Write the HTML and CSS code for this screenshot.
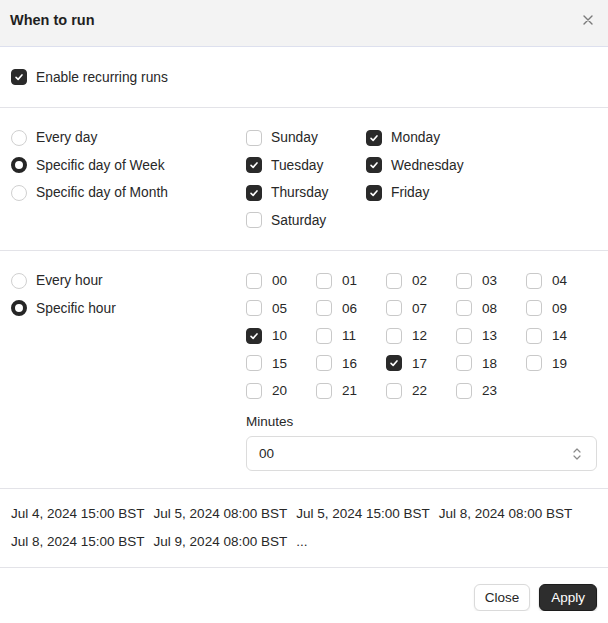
FILE: index.html
```html
<!DOCTYPE html>
<html lang="en">
<head>
<meta charset="utf-8">
<title>When to run</title>
<link rel="stylesheet" href="styles.css">
</head>
<body>
<div class="dialog">
  <header class="head">
    <h1 class="title">When to run</h1>
    <button class="x" aria-label="Close">
      <svg width="10" height="10" viewBox="0 0 10 10"><path d="M1 1L9 9M9 1L1 9" stroke="#7a7a7a" stroke-width="1.4" stroke-linecap="round"/></svg>
    </button>
  </header>

  <section class="sec sec-enable">
    <label class="opt"><span class="cb on"><svg viewBox="0 0 16 16"><path d="M4.6 8.4L7 10.7L11.4 5.6" fill="none" stroke="#fff" stroke-width="1.8" stroke-linecap="round" stroke-linejoin="round"/></svg></span>Enable recurring runs</label>
  </section>

  <section class="sec split sec-days">
    <div class="left">
      <label class="opt"><span class="rd"></span>Every day</label>
      <label class="opt"><span class="rd on"></span>Specific day of Week</label>
      <label class="opt"><span class="rd"></span>Specific day of Month</label>
    </div>
    <div class="right days">
      <label class="opt"><span class="cb"></span>Sunday</label>
      <label class="opt"><span class="cb on"><svg viewBox="0 0 16 16"><path d="M4.6 8.4L7 10.7L11.4 5.6" fill="none" stroke="#fff" stroke-width="1.8" stroke-linecap="round" stroke-linejoin="round"/></svg></span>Monday</label>
      <label class="opt"><span class="cb on"><svg viewBox="0 0 16 16"><path d="M4.6 8.4L7 10.7L11.4 5.6" fill="none" stroke="#fff" stroke-width="1.8" stroke-linecap="round" stroke-linejoin="round"/></svg></span>Tuesday</label>
      <label class="opt"><span class="cb on"><svg viewBox="0 0 16 16"><path d="M4.6 8.4L7 10.7L11.4 5.6" fill="none" stroke="#fff" stroke-width="1.8" stroke-linecap="round" stroke-linejoin="round"/></svg></span>Wednesday</label>
      <label class="opt"><span class="cb on"><svg viewBox="0 0 16 16"><path d="M4.6 8.4L7 10.7L11.4 5.6" fill="none" stroke="#fff" stroke-width="1.8" stroke-linecap="round" stroke-linejoin="round"/></svg></span>Thursday</label>
      <label class="opt"><span class="cb on"><svg viewBox="0 0 16 16"><path d="M4.6 8.4L7 10.7L11.4 5.6" fill="none" stroke="#fff" stroke-width="1.8" stroke-linecap="round" stroke-linejoin="round"/></svg></span>Friday</label>
      <label class="opt"><span class="cb"></span>Saturday</label>
    </div>
  </section>

  <section class="sec split sec-hours">
    <div class="left">
      <label class="opt"><span class="rd"></span>Every hour</label>
      <label class="opt"><span class="rd on"></span>Specific hour</label>
    </div>
    <div class="right">
      <div class="hours">
        <label class="opt"><span class="cb"></span>00</label>
        <label class="opt"><span class="cb"></span>01</label>
        <label class="opt"><span class="cb"></span>02</label>
        <label class="opt"><span class="cb"></span>03</label>
        <label class="opt"><span class="cb"></span>04</label>
        <label class="opt"><span class="cb"></span>05</label>
        <label class="opt"><span class="cb"></span>06</label>
        <label class="opt"><span class="cb"></span>07</label>
        <label class="opt"><span class="cb"></span>08</label>
        <label class="opt"><span class="cb"></span>09</label>
        <label class="opt"><span class="cb on"><svg viewBox="0 0 16 16"><path d="M4.6 8.4L7 10.7L11.4 5.6" fill="none" stroke="#fff" stroke-width="1.8" stroke-linecap="round" stroke-linejoin="round"/></svg></span>10</label>
        <label class="opt"><span class="cb"></span>11</label>
        <label class="opt"><span class="cb"></span>12</label>
        <label class="opt"><span class="cb"></span>13</label>
        <label class="opt"><span class="cb"></span>14</label>
        <label class="opt"><span class="cb"></span>15</label>
        <label class="opt"><span class="cb"></span>16</label>
        <label class="opt"><span class="cb on"><svg viewBox="0 0 16 16"><path d="M4.6 8.4L7 10.7L11.4 5.6" fill="none" stroke="#fff" stroke-width="1.8" stroke-linecap="round" stroke-linejoin="round"/></svg></span>17</label>
        <label class="opt"><span class="cb"></span>18</label>
        <label class="opt"><span class="cb"></span>19</label>
        <label class="opt"><span class="cb"></span>20</label>
        <label class="opt"><span class="cb"></span>21</label>
        <label class="opt"><span class="cb"></span>22</label>
        <label class="opt"><span class="cb"></span>23</label>
      </div>
      <div class="minutes">
        <div class="lbl">Minutes</div>
        <div class="select">
          <span>00</span>
          <svg width="10" height="14" viewBox="0 0 10 14"><path d="M2 5L5 2L8 5M2 9L5 12L8 9" fill="none" stroke="#8a8a8a" stroke-width="1.2" stroke-linecap="round" stroke-linejoin="round"/></svg>
        </div>
      </div>
    </div>
  </section>

  <section class="sec dates">
    <span>Jul 4, 2024 15:00 BST</span>
    <span>Jul 5, 2024 08:00 BST</span>
    <span>Jul 5, 2024 15:00 BST</span>
    <span>Jul 8, 2024 08:00 BST</span>
    <span>Jul 8, 2024 15:00 BST</span>
    <span>Jul 9, 2024 08:00 BST</span>
    <span>...</span>
  </section>

  <footer class="foot">
    <button class="btn">Close</button>
    <button class="btn primary">Apply</button>
  </footer>
</div>
</body>
</html>
```

FILE: styles.css
```css
* { box-sizing: border-box; }
html, body { margin: 0; padding: 0; background: #fff; }
body {
  font-family: "Liberation Sans", Arial, sans-serif;
  font-size: 13.5px;
  color: #282828;
}
.dialog { width: 608px; }

.head {
  height: 47px;
  background: #f3f3f3;
  border-bottom: 1px solid #dde0ee;
  display: flex;
  justify-content: space-between;
  align-items: flex-start;
  padding: 10px 15px 0 10px;
}
.title {
  margin: 0;
  font-size: 14.5px;
  font-weight: 700;
  line-height: 20px;
  color: #1f1f1f;
}
.x {
  border: 0;
  background: none;
  padding: 0;
  width: 10px;
  height: 20px;
  display: flex;
  align-items: center;
  justify-content: center;
}

.sec { border-bottom: 1px solid #e3e3e8; padding: 0 11px; }
.sec-enable { padding-top: 20px; padding-bottom: 20px; }
.sec-enable .opt { height: 20px; }

.split { display: flex; }
.left {
  width: 235px;
  display: grid;
  grid-auto-rows: 27.5px;
  align-content: start;
}
.right { flex: 1; }
.sec-days { padding-top: 16px; padding-bottom: 16px; }
.sec-hours { padding-top: 16px; padding-bottom: 17px; }

.opt {
  display: flex;
  align-items: center;
  gap: 9px;
  white-space: nowrap;
  font-size: 13.8px;
}
.days {
  display: grid;
  grid-template-columns: 120px 120px;
  grid-auto-rows: 27.5px;
}
.hours {
  display: grid;
  grid-template-columns: repeat(5, 70px);
  grid-auto-rows: 27.5px;
}
.hours .opt { gap: 10px; font-size: 13.5px; }

.cb {
  width: 16px;
  height: 16px;
  border: 1px solid #c9c9c9;
  border-radius: 4px;
  background: #fff;
  flex: none;
  display: flex;
}
.cb.on { background: #2a2a2a; border-color: #2a2a2a; }
.cb svg { width: 14px; height: 14px; }

.rd {
  width: 16px;
  height: 16px;
  border: 1px solid #d0d0d0;
  border-radius: 50%;
  background: #fff;
  flex: none;
}
.rd.on { border: 4.5px solid #262626; }

.minutes { margin-top: 7.5px; }
.lbl { line-height: 20px; margin-bottom: 4px; }
.select {
  height: 35px;
  border: 1px solid #dcdcdc;
  border-radius: 6px;
  display: flex;
  align-items: center;
  justify-content: space-between;
  padding: 0 14px 0 12px;
}

.dates {
  display: flex;
  flex-wrap: wrap;
  column-gap: 9px;
  padding-top: 11px;
  padding-bottom: 11px;
  line-height: 28px;
}

.foot {
  display: flex;
  justify-content: flex-end;
  gap: 9px;
  padding: 16px 11px 0;
}
.btn {
  font-family: inherit;
  font-size: 13.5px;
  height: 27px;
  padding: 0 10px;
  border-radius: 6px;
  border: 1px solid #dadada;
  background: #fff;
  color: #262626;
  box-shadow: 0 1px 2px rgba(0,0,0,0.08);
}
.btn.primary {
  background: #2d2d2d;
  border-color: #1c1c1c;
  color: #fff;
  padding: 0 11px;
  box-shadow: 0 1px 2px rgba(0,0,0,0.25);
}
```
